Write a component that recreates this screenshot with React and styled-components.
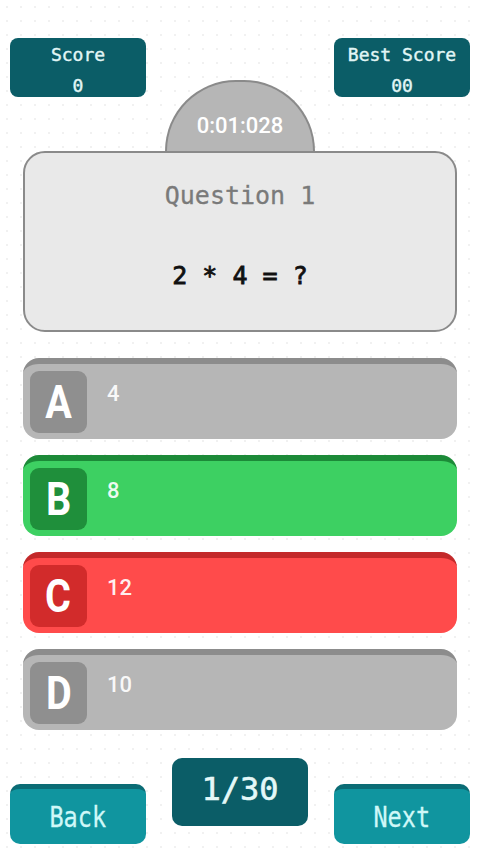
import React from "react";
import styled, { createGlobalStyle } from "styled-components";

const Global = createGlobalStyle`
  html, body { margin: 0; padding: 0; background: #ffffff; }
  body {
    font-family: "DejaVu Sans Mono", "Liberation Mono", monospace;
    background-color: #ffffff;
    background-image: radial-gradient(#f1f1f1 1px, transparent 1.2px);
    background-size: 14px 14px;
  }
`;

const Page = styled.div`
  width: 480px;
  height: 853px;
  display: flex;
  flex-direction: column;
  box-sizing: border-box;
  padding-top: 38px;
`;

const Header = styled.div`
  display: flex;
  justify-content: space-between;
  padding: 0 10px;
  height: 113px;
`;

const ScoreBox = styled.div`
  width: 136px;
  height: 59px;
  box-sizing: border-box;
  padding-top: 5px;
  border-radius: 8px;
  background: #0b5d67;
  color: #e2f6f6;
  display: flex;
  flex-direction: column;
  align-items: center;
  justify-content: center;
  font-size: 18px;
  line-height: 31px;
  -webkit-text-stroke: 0.4px #e2f6f6;
  align-self: flex-start;
`;

const Timer = styled.div`
  align-self: flex-end;
  width: 150px;
  height: 71px;
  box-sizing: border-box;
  border: 2px solid #8a8a8a;
  border-bottom: none;
  border-radius: 75px 75px 0 0;
  background: #b6b6b6;
  color: #ffffff;
  font-family: Roboto, "Liberation Sans", sans-serif;
  font-weight: 500;
  font-size: 22px;
  display: flex;
  justify-content: center;
  padding-top: 31px;
`;

const Card = styled.div`
  margin: 0 23px;
  height: 181px;
  box-sizing: border-box;
  border: 2px solid #8a8a8a;
  border-radius: 22px;
  background: #e9e9e9;
  display: flex;
  flex-direction: column;
  align-items: center;
`;

const QTitle = styled.div`
  margin-top: 27px;
  font-size: 25px;
  color: #7a7a7a;
  line-height: 32px;
  -webkit-text-stroke: 0.3px #7a7a7a;
`;

const QText = styled.div`
  margin-top: 48px;
  font-size: 25px;
  color: #111;
  line-height: 32px;
  -webkit-text-stroke: 0.8px #111;
`;

const Options = styled.div`
  margin: 26px 23px 0;
  display: flex;
  flex-direction: column;
  gap: 16px;
`;

const palette = {
  gray: { body: "#b6b6b6", top: "#8c8c8c", box: "#8f8f8f" },
  green: { body: "#3dd062", top: "#1c8a38", box: "#1f8f3b" },
  red: { body: "#ff4b4b", top: "#c3292a", box: "#d22b2b" },
};

const Option = styled.div`
  height: 81px;
  box-sizing: border-box;
  border-radius: 16px;
  background: ${(p) => palette[p.$tone].body};
  border-top: 6px solid ${(p) => palette[p.$tone].top};
  display: flex;
  align-items: flex-start;
  padding: 7px 7px 0;
  gap: 20px;
`;

const Letter = styled.div`
  width: 57px;
  height: 62px;
  border-radius: 9px;
  background: ${(p) => palette[p.$tone].box};
  color: #ffffff;
  font-family: Roboto, "Liberation Sans", sans-serif;
  font-weight: 700;
  font-size: 46px;
  display: flex;
  align-items: center;
  justify-content: center;
  & > span { display: inline-block; transform: scaleX(0.86); }
`;

const Value = styled.div`
  margin-top: 9px;
  color: rgba(255, 255, 255, 0.92);
  font-family: Roboto, "Liberation Sans", sans-serif;
  font-weight: 500;
  font-size: 22px;
  line-height: 28px;
`;

const Footer = styled.div`
  margin-top: 28px;
  display: flex;
  justify-content: space-between;
  align-items: flex-start;
  padding: 0 10px;
`;

const NavButton = styled.button`
  margin-top: 26px;
  width: 136px;
  height: 60px;
  box-sizing: border-box;
  border: none;
  border-top: 5px solid #0b6c75;
  border-radius: 10px;
  background: #10959f;
  color: #cff8f8;
  font-family: "DejaVu Sans Mono", monospace;
  font-size: 28px;
  padding: 2px 0 0;
  display: flex;
  align-items: center;
  justify-content: center;
  -webkit-text-stroke: 0.3px #cff8f8;
  & > span { display: inline-block; transform: scaleX(0.84); }
`;

const Counter = styled.div`
  width: 136px;
  height: 68px;
  border-radius: 10px;
  background: #0b5d67;
  color: #e4f8f8;
  font-family: "DejaVu Sans Mono", monospace;
  font-size: 32px;
  -webkit-text-stroke: 0.6px #e4f8f8;
  display: flex;
  align-items: center;
  justify-content: center;
  padding-bottom: 6px;
  box-sizing: border-box;
`;

const options = [
  { l: "A", v: "4", t: "gray" },
  { l: "B", v: "8", t: "green" },
  { l: "C", v: "12", t: "red" },
  { l: "D", v: "10", t: "gray" },
];

export default function App() {
  return (
    <>
      <Global />
      <Page>
        <Header>
          <ScoreBox>
            <div>Score</div>
            <div>0</div>
          </ScoreBox>
          <Timer>0:01:028</Timer>
          <ScoreBox>
            <div>Best Score</div>
            <div>00</div>
          </ScoreBox>
        </Header>
        <Card>
          <QTitle>Question 1</QTitle>
          <QText>2 * 4 = ?</QText>
        </Card>
        <Options>
          {options.map((o) => (
            <Option key={o.l} $tone={o.t}>
              <Letter $tone={o.t}>
                <span>{o.l}</span>
              </Letter>
              <Value>{o.v}</Value>
            </Option>
          ))}
        </Options>
        <Footer>
          <NavButton>
            <span>Back</span>
          </NavButton>
          <Counter>1/30</Counter>
          <NavButton>
            <span>Next</span>
          </NavButton>
        </Footer>
      </Page>
    </>
  );
}
